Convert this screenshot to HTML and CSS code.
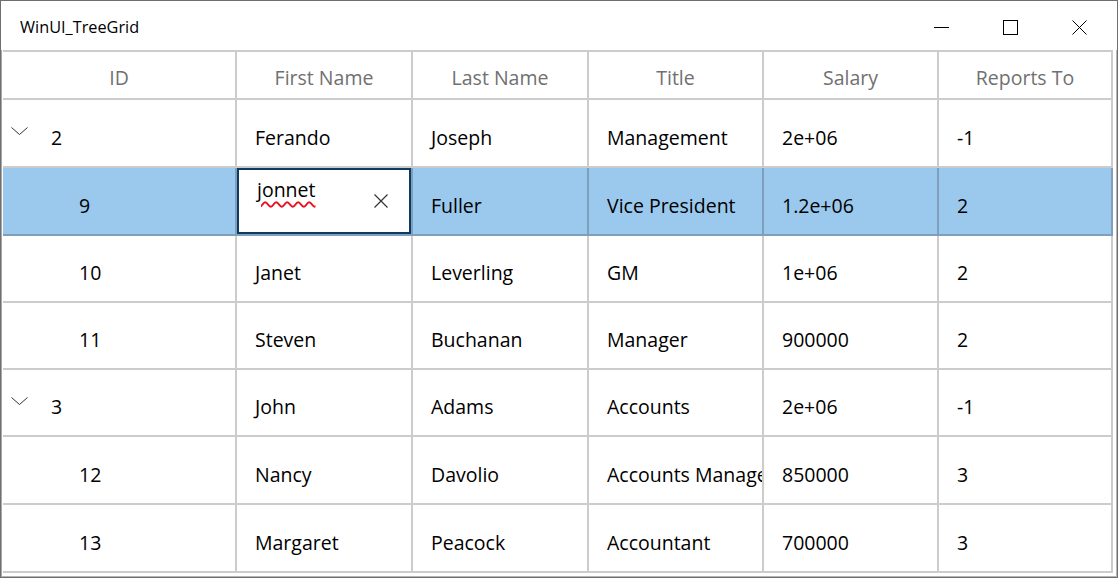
FILE: index.html
```html
<!DOCTYPE html>
<html lang="en">
<head>
<meta charset="utf-8">
<title>WinUI_TreeGrid</title>
<link rel="stylesheet" href="styles.css">
</head>
<body>
<div class="window">
  <div class="titlebar">
    <span class="title">WinUI_TreeGrid</span>
    <div class="caption">
      <div class="cbtn"><svg width="15" height="15" viewBox="0 0 15 15"><line x1="0" y1="7.5" x2="15" y2="7.5" stroke="#000" stroke-width="1"/></svg></div>
      <div class="cbtn"><svg width="15" height="15" viewBox="0 0 15 15"><rect x="0.5" y="0.5" width="14" height="14" fill="none" stroke="#000" stroke-width="1"/></svg></div>
      <div class="cbtn"><svg width="15" height="15" viewBox="0 0 15 15"><path d="M0.5 0.5 L14.5 14.5 M14.5 0.5 L0.5 14.5" fill="none" stroke="#000" stroke-width="1"/></svg></div>
    </div>
  </div>
  <div class="gridwrap">
    <div class="row header">
      <div class="cell"><span class="txt">ID</span></div>
      <div class="cell"><span class="txt">First Name</span></div>
      <div class="cell"><span class="txt">Last Name</span></div>
      <div class="cell"><span class="txt">Title</span></div>
      <div class="cell"><span class="txt">Salary</span></div>
      <div class="cell"><span class="txt">Reports To</span></div>
    </div>
    <div class="row h68">
      <div class="cell idc lvl0"><span class="exp"><svg width="17" height="8" viewBox="0 0 17 8"><polyline points="0.5,0.5 8.5,7.5 16.5,0.5" fill="none" stroke="#333" stroke-width="1"/></svg></span><span class="txt">2</span></div>
      <div class="cell"><span class="txt">Ferando</span></div>
      <div class="cell"><span class="txt">Joseph</span></div>
      <div class="cell"><span class="txt">Management</span></div>
      <div class="cell"><span class="txt">2e+06</span></div>
      <div class="cell"><span class="txt">-1</span></div>
    </div>
    <div class="row h68 sel">
      <div class="cell idc lvl1"><span class="txt">9</span></div>
      <div class="cell editing">
        <div class="editor">
          <span class="val">jonnet</span>
          <span class="clear"><svg width="14" height="14" viewBox="0 0 14 14"><path d="M0.5 0.5 L13.5 13.5 M13.5 0.5 L0.5 13.5" fill="none" stroke="#333" stroke-width="1.2"/></svg></span>
        </div>
      </div>
      <div class="cell"><span class="txt">Fuller</span></div>
      <div class="cell"><span class="txt">Vice President</span></div>
      <div class="cell"><span class="txt">1.2e+06</span></div>
      <div class="cell"><span class="txt">2</span></div>
    </div>
    <div class="row h67">
      <div class="cell idc lvl1"><span class="txt">10</span></div>
      <div class="cell"><span class="txt">Janet</span></div>
      <div class="cell"><span class="txt">Leverling</span></div>
      <div class="cell"><span class="txt">GM</span></div>
      <div class="cell"><span class="txt">1e+06</span></div>
      <div class="cell"><span class="txt">2</span></div>
    </div>
    <div class="row h67">
      <div class="cell idc lvl1"><span class="txt">11</span></div>
      <div class="cell"><span class="txt">Steven</span></div>
      <div class="cell"><span class="txt">Buchanan</span></div>
      <div class="cell"><span class="txt">Manager</span></div>
      <div class="cell"><span class="txt">900000</span></div>
      <div class="cell"><span class="txt">2</span></div>
    </div>
    <div class="row h67">
      <div class="cell idc lvl0"><span class="exp"><svg width="17" height="8" viewBox="0 0 17 8"><polyline points="0.5,0.5 8.5,7.5 16.5,0.5" fill="none" stroke="#333" stroke-width="1"/></svg></span><span class="txt">3</span></div>
      <div class="cell"><span class="txt">John</span></div>
      <div class="cell"><span class="txt">Adams</span></div>
      <div class="cell"><span class="txt">Accounts</span></div>
      <div class="cell"><span class="txt">2e+06</span></div>
      <div class="cell"><span class="txt">-1</span></div>
    </div>
    <div class="row h68">
      <div class="cell idc lvl1"><span class="txt">12</span></div>
      <div class="cell"><span class="txt">Nancy</span></div>
      <div class="cell"><span class="txt">Davolio</span></div>
      <div class="cell"><span class="txt">Accounts Manager</span></div>
      <div class="cell"><span class="txt">850000</span></div>
      <div class="cell"><span class="txt">3</span></div>
    </div>
    <div class="row h68">
      <div class="cell idc lvl1"><span class="txt">13</span></div>
      <div class="cell"><span class="txt">Margaret</span></div>
      <div class="cell"><span class="txt">Peacock</span></div>
      <div class="cell"><span class="txt">Accountant</span></div>
      <div class="cell"><span class="txt">700000</span></div>
      <div class="cell"><span class="txt">3</span></div>
    </div>
  </div>
</div>
</body>
</html>
```

FILE: styles.css
```css
* { box-sizing: border-box; }
html, body { margin: 0; padding: 0; background: #fff; }
body { font-family: "Open Sans", "Noto Sans", sans-serif; }

.window {
  width: 1118px;
  height: 578px;
  border: 1px solid #6f6f6f;
  overflow: hidden;
  display: flex;
  flex-direction: column;
  background: #fff;
}

.titlebar {
  height: 49px;
  flex: none;
  display: flex;
  align-items: stretch;
  justify-content: space-between;
}
.title {
  font-size: 16.3px;
  color: #000;
  padding-left: 19px;
  padding-top: 3px;
  display: flex;
  align-items: center;
}
.caption {
  display: flex;
  padding-right: 3px;
  padding-top: 3px;
}
.cbtn {
  width: 69px;
  display: flex;
  align-items: center;
  justify-content: center;
}
.cbtn svg { display: block; }

.gridwrap {
  flex: 1;
  border-left: 1px solid #a8a8a8;
  border-right: 1px solid #b4b4b4;
  border-bottom: 1px solid #b4b4b4;
  padding: 0 3px 0 1px;
  overflow: hidden;
}

.row {
  display: grid;
  grid-template-columns: 234px 176px 176px 175px 175px 174px;
  border-bottom: 2px solid #cccccc;
}
.h68 { height: 68px; }
.h67 { height: 67px; }
.header {
  height: 50px;
  border-top: 2px solid #cccccc;
}

.cell {
  border-right: 2px solid #cccccc;
  display: flex;
  align-items: center;
  padding-left: 18px;
  font-size: 19.5px;
  color: #000;
  white-space: nowrap;
  overflow: hidden;
}
.txt { padding-top: 8px; }

.header .cell {
  justify-content: center;
  padding-left: 0;
  color: #707070;
}
.header .txt { padding-top: 4px; }

.idc { padding-left: 8px; }
.lvl1 { padding-left: 76px; }
.exp {
  display: flex;
  padding-bottom: 4px;
  margin-right: 23px;
}
.exp svg { display: block; }

.sel {
  background: #9bc9ee;
  border-bottom-color: #7f9fbd;
}
.sel .cell { border-right-color: #7f9fbd; }

.cell.editing {
  padding: 0;
  align-items: stretch;
}
.editor {
  flex: 1;
  border: 2px solid #0f3a61;
  background: #fff;
  display: flex;
  justify-content: space-between;
  padding-left: 18px;
  padding-right: 21px;
}
.val {
  align-self: flex-start;
  padding-top: 6px;
  text-decoration: underline wavy #e81123;
  text-decoration-thickness: 1.5px;
  text-underline-offset: 4px;
}
.clear {
  align-self: center;
  display: flex;
}
.clear svg { display: block; }
```
